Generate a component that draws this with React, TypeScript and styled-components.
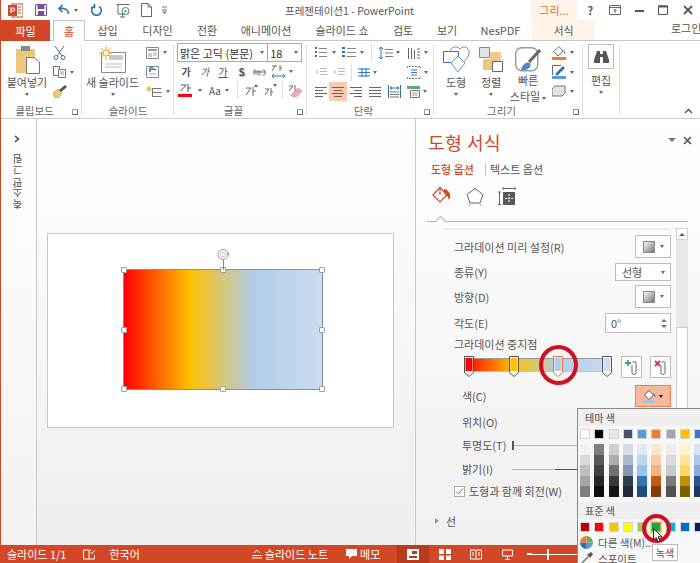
import React from 'react';
import styled, { createGlobalStyle } from 'styled-components';

const GlobalStyle = createGlobalStyle`
  html, body { margin: 0; padding: 0; background: #fff; }
  body { font-family: "Noto Sans CJK KR", "Liberation Sans", sans-serif; font-size: 11px; color: #444; }
  * { box-sizing: border-box; }
`;

const RED = '#D24726';

const Root = styled.div`
  position: relative; width: 700px; height: 563px; overflow: hidden;
  display: flex; flex-direction: column; background: #fff; border-left: 1px solid ${RED};
`;
const TitleBar = styled.div`display: flex; height: 20px; align-items: center; flex: none;`;
const Quick = styled.div`display: flex; width: 531px; height: 20px; align-items: center;`;
const QuickSlot = styled.div<{ $w: number }>`width: ${p => p.$w}px; display: flex; justify-content: center; align-items: center; gap: 4px; height: 20px; flex: none;`;
const AppTitle = styled.div`margin-left: 113px; font-size: 10.5px; color: #555; white-space: nowrap;`;
const ContextTitle = styled.div`
  width: 46px; height: 20px; background: #fdf3e9; color: #d9722c; font-size: 11px;
  display: flex; align-items: center; justify-content: center; flex: none;
`;
const WinControls = styled.div`display: flex; margin-left: 1px; align-items: center;`;
const WinBtn = styled.div`width: 24.4px; height: 20px; display: flex; align-items: center; justify-content: center; font-weight: 700; font-size: 11px; color: #555;`;

const TabBar = styled.div`display: flex; height: 21px; flex: none; border-bottom: 1px solid #c6c6c6; align-items: stretch;`;
const FileTab = styled.div`width: 49px; background: ${RED}; color: #fff; display: flex; align-items: center; justify-content: center; font-size: 11px; margin-bottom: -1px; margin-right: 3px;`;
const Tab = styled.div<{ $w: number; $active?: boolean; $context?: boolean }>`
  width: ${p => p.$w}px; display: flex; align-items: center; justify-content: center; font-size: 11px; white-space: nowrap;
  color: ${p => (p.$active ? RED : '#555')};
  background: ${p => (p.$context ? '#fdf3e9' : '#fff')};
  ${p => p.$active && 'border: 1px solid #c6c6c6; border-bottom: 0; margin-bottom: -1px; height: 21px;'}
`;
const Login = styled.div`margin-left: auto; font-size: 11px; color: #555; align-self: center; white-space: nowrap; margin-bottom: 5px; width: 29px; overflow: hidden;`;

const Ribbon = styled.div`display: flex; height: 78px; flex: none; border-bottom: 1px solid #cfcfcf; position: relative;`;
const Group = styled.div<{ $w: number }>`
  width: ${p => p.$w}px; flex: none; position: relative; display: flex; flex-direction: column;
  margin-top: 2px; &::after { content: ''; position: absolute; right: 0; top: 2px; bottom: 3px; width: 1px; background: #dedede; }
`;
const GroupBody = styled.div`flex: 1; display: flex; min-height: 0;`;
const GroupLabel = styled.div<{ $launcher?: boolean }>`
  height: 14px; text-align: center; font-size: 10.5px; line-height: 14px; color: #666; padding-right: ${p => (p.$launcher ? 14 : 0)}px;
`;
const Launcher = styled.div`
  position: absolute; right: 4px; bottom: 3px; width: 6px; height: 6px; border: 1px solid #999; border-width: 1px 0 0 1px;
  &::after { content: ''; position: absolute; right: 0; bottom: 0; width: 4px; height: 4px; border-right: 1px solid #666; border-bottom: 1px solid #666; }
`;
const BigBtn = styled.div<{ $w: number }>`
  width: ${p => p.$w}px; flex: none; display: flex; flex-direction: column; align-items: center;
  font-size: 11px; color: #555; line-height: 13px; text-align: center; white-space: nowrap;
`;
const IconSlot = styled.div`height: 33px; display: flex; align-items: center; justify-content: center; flex: none;`;
const BigLabel = styled.div``;
const TwoLineLabel = styled.div`margin-top: -4px; line-height: 16px;`;
const Caret = styled.span<{ $dark?: boolean }>`
  display: inline-block; width: 0; height: 0; flex: none;
  border-left: 2.5px solid transparent; border-right: 2.5px solid transparent;
  border-top: 3px solid ${p => (p.$dark ? '#222' : '#666')};
`;
const InlineCaret = styled(Caret)`margin-left: 2px; vertical-align: middle;`;
const CaretLine = styled.div`height: 10px; display: flex; align-items: center; justify-content: center;`;
const SmallCol = styled.div<{ $w: number; $pl?: number }>`width: ${p => p.$w}px; flex: none; display: flex; flex-direction: column; padding-left: ${p => p.$pl ?? 0}px;`;
const SmallBtn = styled.div`height: 19.5px; display: flex; align-items: center; gap: 4px;`;
const FontCol = styled.div`display: flex; flex-direction: column; padding: 0 0 0 3px; width: 100%;`;
const ComboRow = styled.div`display: flex; height: 19px; border: 1px solid #ababab; width: 125px; background: #fff;`;
const Combo = styled.div<{ $w: number }>`
  width: ${p => p.$w}px; display: flex; align-items: center; justify-content: space-between; padding: 0 3px 0 2px; font-size: 11px; color: #333;
  white-space: nowrap; & + & { border-left: 1px solid #ababab; }
`;
const FontRow = styled.div`height: 19px; display: flex; align-items: center;`;
const FontCell = styled.div<{ $w: number; $bold?: boolean; $italic?: boolean; $under?: boolean; $shadow?: boolean }>`
  width: ${p => p.$w}px; flex: none; display: flex; align-items: center; justify-content: center; gap: 3px; font-size: 10px; color: #555; white-space: nowrap;
  font-weight: ${p => (p.$bold ? 700 : 400)}; font-style: ${p => (p.$italic ? 'italic' : 'normal')};
  text-decoration: ${p => (p.$under ? 'underline' : 'none')};
  text-shadow: ${p => (p.$shadow ? '1px 1px 1px #aaa' : 'none')};
`;
const VSep = styled.div`width: 1px; height: 17px; background: #dedede; flex: none;`;
const ParaGrid = styled.div`display: flex; flex-direction: column;`;
const ParaRow = styled.div`display: flex; height: 19.5px; align-items: center;`;
const ParaCell = styled.div<{ $w: number; $on?: boolean }>`
  width: ${p => p.$w}px; flex: none; height: 19px; display: flex; align-items: center; justify-content: center; gap: 3px;
  background: ${p => (p.$on ? '#fcc9ae' : 'transparent')};
`;
const BinoBox = styled.div`width: 26px; height: 25px; border: 1px solid #bcbcbc; display: flex; align-items: center; justify-content: center; margin: 1px 0 5px; flex: none;`;
const Collapse = styled.div`position: absolute; right: 7px; bottom: 4px; color: #555; display: flex;`;

const Main = styled.div`flex: 1; display: flex; min-height: 0;`;
const SidePane = styled.div`
  width: 36px; flex: none; border-right: 1px solid #c9c9c9; display: flex; flex-direction: column; align-items: center;
  padding-top: 16px; background: linear-gradient(#fff, #f2f2f2); padding-right: 3px;
`;
const SideText = styled.div`
  writing-mode: vertical-rl; transform: rotate(180deg); font-size: 10.5px; color: #555; margin-top: 11px; white-space: nowrap;
`;
const Canvas = styled.div`
  width: 379px; flex: none; padding: 114px 0 0 10px; background: linear-gradient(#fff, #eeeeee);
  border-right: 1px solid #c9c9c9;
`;
const Slide = styled.div`position: relative; width: 347px; height: 195px; background: #fff; border: 1px solid #c8c8c8;`;
const ShapeBox = styled.div`
  position: absolute; left: 75px; top: 35px; width: 200px; height: 121px; border: 1px solid #7e93a8;
  background: linear-gradient(90deg, #ff0000 0%, #ffc000 33%, #b0cde8 65%, #cadcf0 100%);
`;
const Handle = styled.span<{ $x: number; $y: number }>`
  position: absolute; left: ${p => p.$x}%; top: ${p => p.$y}%; width: 6px; height: 6px; margin: -3px 0 0 -3px; background: #fff; border: 1px solid #a0a0a0; border-radius: 1px;
`;
const RotateStem = styled.div`position: absolute; left: 50%; top: -10px; width: 1px; height: 10px; background: #8a8a8a;`;
const RotateHandle = styled.div`position: absolute; left: calc(50% - 6px); top: -22px; display: flex;`;

const Pane = styled.div`flex: 1; display: flex; flex-direction: column; min-width: 0; background: linear-gradient(#fff, #f0f0f0);`;
const PaneTitle = styled.div`
  height: 36px; display: flex; align-items: center; padding: 10px 8px 0 12px; color: ${RED}; font-size: 18px; letter-spacing: 0.6px;
`;
const PaneClose = styled.div`margin-left: auto; display: flex; align-items: center; gap: 7px; margin-bottom: 4px;`;
const PaneTabs = styled.div`height: 18px; margin-top: 5px; display: flex; align-items: center; padding-left: 15px; font-size: 11px;`;
const PaneTab = styled.div<{ $active?: boolean }>`color: ${p => (p.$active ? RED : '#555')}; font-weight: ${p => (p.$active ? 500 : 400)}; white-space: nowrap;`;
const PaneTabSep = styled.div`width: 1px; height: 13px; background: #c8c8c8; margin: 0 4px 0 11px;`;
const PaneIcons = styled.div`height: 30px; margin-top: 3px; display: flex; align-items: center; padding-left: 16px; gap: 14px;`;
const NotchLine = styled.div`
  position: relative; height: 1px; background: #b5b5b5; margin: 10px 12px 0 11px; flex: none;
  &::after { content: ''; position: absolute; left: 9px; top: -4px; width: 8px; height: 8px; background: #fbfbfb; border-left: 1px solid #b5b5b5; border-top: 1px solid #b5b5b5; transform: rotate(45deg) scale(.9); }
`;
const PaneBody = styled.div`flex: 1; display: flex; margin-top: 6px; min-height: 0;`;
const PaneScroll = styled.div`width: 255px; flex: none; border-top: 2px solid #ececec; background-clip: padding-box; position: relative;
  &::before { content: ''; position: absolute; left: 0; width: 29px; top: -2px; height: 2px; background: #f9f9f9; }
`;
const ScrollBar = styled.div`width: 12px; margin-left: 5px; background: #e9e9e9; display: flex; flex-direction: column; flex: none;`;
const ScrollUp = styled.div`height: 12px; background: #fff; border: 1px solid #cfcfcf; display: flex; align-items: center; justify-content: center;
  &::after { content: ''; border-left: 3px solid transparent; border-right: 3px solid transparent; border-bottom: 3px solid #666; }
`;
const ScrollThumb = styled.div`margin-top: 87px; flex: 1; background: #fff; border: 1px solid #cfcfcf;`;
const FormRow = styled.div<{ $h: number; $top: number; $indent?: boolean }>`
  height: ${p => p.$h}px; margin-top: ${p => p.$top}px; display: flex; align-items: center;
  padding-left: ${p => (p.$indent ? 46 : 38)}px; font-size: 11px; color: #555; white-space: nowrap;
`;
const Spacer = styled.div`flex: 1;`;
const IconCombo = styled.div`
  width: 36px; height: 100%; border: 1px solid #bdbdbd; background: #fff; display: flex; align-items: center; justify-content: center; gap: 5px;
`;
const GradIcon = styled.div`width: 12px; height: 12px; background: linear-gradient(135deg, #f8f8f8, #777); border: 1px solid #888;`;
const SelectBox = styled.div`
  width: 56px; height: 100%; border: 1px solid #bdbdbd; background: #fff; display: flex; align-items: center; justify-content: space-between; padding: 0 5px 0 6px;
`;
const SpinBox = styled.div`
  width: 66px; height: 100%; border: 1px solid #bdbdbd; background: #fff; display: flex; align-items: center; justify-content: space-between; padding: 0 3px 0 5px;
`;
const SpinArrows = styled.div`display: flex; flex-direction: column; gap: 3px;
  & > i { display: block; border-left: 3px solid transparent; border-right: 3px solid transparent; }
  & > i:first-child { border-bottom: 3px solid #777; }
  & > i:last-child { border-top: 3px solid #777; }
`;
const StopRow = styled.div`height: 22px; margin-top: 5px; display: flex; padding-left: 48px;`;
const StopBar = styled.div`
  position: relative; width: 147px; height: 14px; margin-top: 2px; flex: none;
  background: linear-gradient(90deg, #ff0000 0%, #ffc000 33%, #b0cde8 65%, #cadcf0 100%);
  box-shadow: inset 0 1px #9a9a9a, inset 0 -1px #c4c4c4;
`;
const Stop = styled.svg<{ $x: number }>`position: absolute; left: ${p => p.$x}px; top: -2px;`;
const StopBtn = styled.div<{ $ml: number }>`
  width: 21px; height: 22px; margin-left: ${p => p.$ml}px; border: 1px solid #bdbdbd; background: #fff; display: flex; align-items: center; justify-content: center; flex: none;
`;
const ColorBtn = styled.div`
  width: 36px; height: 100%; background: #f6b99c; border: 1px solid #ef7d4f; display: flex; align-items: center; justify-content: center; gap: 3px;
`;
const SliderTrack = styled.div<{ $w: number }>`
  position: absolute; left: 96px; width: ${p => p.$w}px; height: 1px; background: #bbb;
`;
const SliderMark = styled.div`position: absolute; left: 0; top: -4px; width: 2px; height: 9px; background: #555;`;
const SliderDark = styled.div`position: absolute; left: 43px; right: 0; top: 0; height: 1px; background: #555;`;
const SliderRow = styled(FormRow)`position: relative;`;
const Check = styled.div`width: 11px; height: 11px; border: 1px solid #aaa; background: #fff; margin-right: 4px; display: flex; align-items: center; justify-content: center;`;
const SectionArrow = styled.span`display: inline-block; margin-left: -19px; margin-right: 7px; border-left: 4px solid #999; border-top: 3.5px solid transparent; border-bottom: 3.5px solid transparent;`;

const StatusBar = styled.div`
  height: 18px; flex: none; background: ${RED}; color: #fff; display: flex; align-items: center; font-size: 11px; padding-left: 6px; white-space: nowrap;
`;
const StatusItem = styled.div<{ $left: number; $gap?: number }>`margin-left: ${p => p.$left}px; display: flex; align-items: center; gap: ${p => p.$gap ?? 3}px; flex: none;`;
const ViewBtn = styled.div<{ $w: number; $on?: boolean; $left?: number }>`
  width: ${p => p.$w}px; height: 18px; margin-left: ${p => p.$left ?? 0}px; background: ${p => (p.$on ? '#b83b1e' : 'transparent')}; display: flex; align-items: center; justify-content: center; flex: none;
`;
const ZoomLine = styled.div`position: relative; width: 50px; height: 1px; background: #fff; margin-left: 4px; flex: none;
  &::before { content: ''; position: absolute; left: 0; top: -1px; width: 5px; height: 2px; background: #fff; }
  &::after { content: ''; position: absolute; left: 20px; top: -5px; width: 2px; height: 11px; background: #fff; }
`;

const Popup = styled.div`
  position: absolute; left: 576px; top: 408px; width: 150px; bottom: 0; background: #f7f7f7; border: 1px solid #8a8a8a; border-right: 0; border-bottom: 0; display: flex; flex-direction: column;
`;
const PopHeader = styled.div`height: 17px; background: #efefef; font-size: 10px; font-weight: 500; color: #666; padding-left: 7px; display: flex; align-items: center; flex: none;`;
const SwatchRow = styled.div`display: flex; padding: 3px 0 0 2px; flex: none;`;
const Swatch = styled.div<{ $c: string; $hot?: boolean }>`
  width: 10px; height: 10px; margin-right: 4.3px; flex: none; background: ${p => p.$c}; border: 1px solid ${p => (p.$hot ? '#f9a83d' : '#d4d4d4')};
  ${p => p.$hot && 'outline: 1px solid #f9c66b;'}
`;
const ShadeRow = styled.div`display: flex; padding: 5px 0 0 2px; flex: none; height: 63px;`;
const ShadeCol = styled.div`width: 10px; height: 53px; margin-right: 4.3px; display: flex; flex-direction: column; flex: none;`;
const Shade = styled.div<{ $c: string }>`flex: 1; background: ${p => p.$c};`;
const PopItems = styled.div`padding-top: 2px; display: flex; flex-direction: column;`;
const PopItem = styled.div`height: 16px; display: flex; align-items: center; gap: 5px; padding-left: 2px; font-size: 10.5px; color: #555; white-space: nowrap; flex: none;`;

const RingMark = styled.div<{ $x: number; $y: number; $w: number; $h: number }>`
  position: absolute; left: ${p => p.$x}px; top: ${p => p.$y}px; width: ${p => p.$w}px; height: ${p => p.$h}px;
  border: 4px solid #d1101f; border-radius: 50%; pointer-events: none;
`;
const CursorMark = styled.svg`position: absolute; left: 652px; top: 528px;`;
const TipBox = styled.div`
  position: absolute; left: 651px; top: 544px; width: 26px; height: 17px; background: #fff; border: 1px solid #bdbdbd; font-size: 10px; color: #555;
  display: flex; align-items: center; justify-content: center; white-space: nowrap;
`;

type IconProps = { w?: number; h?: number; children: React.ReactNode };
const Ico = ({ w = 14, h = 14, children }: IconProps) => (
  <svg width={w} height={h} viewBox={`0 0 ${w} ${h}`} fill="none" style={{ flex: 'none', display: 'block' }}>{children}</svg>
);

const AlignIcon = ({ kind }: { kind: 'l' | 'c' | 'r' | 'j' }) => {
  const d = {
    l: 'M0 1.500H12M0 4.500H8M0 7.500H12M0 10.500H8',
    c: 'M0 1.500H12M2 4.500H10M0 7.500H12M2 10.500H10',
    r: 'M0 1.500H12M4 4.500H12M0 7.500H12M4 10.500H12',
    j: 'M0 1.500H12M0 4.500H12M0 7.500H12M0 10.500H12',
  }[kind];
  return <Ico w={12} h={12}><path d={d} stroke="#666" /></Ico>;
};

const THEME = ['#FFFFFF', '#000000', '#E7E6E6', '#44546A', '#5B9BD5', '#ED7D31', '#A5A5A5', '#FFC000', '#4472C4'];
const SHADES = [
  ['#F2F2F2', '#D9D9D9', '#BFBFBF', '#A6A6A6', '#7F7F7F'],
  ['#7F7F7F', '#595959', '#404040', '#262626', '#0D0D0D'],
  ['#D0CECE', '#AFABAB', '#757070', '#3A3838', '#171616'],
  ['#D6DCE4', '#ADB9CA', '#8496B0', '#333F4F', '#222B35'],
  ['#DEEAF6', '#BDD7EE', '#9CC3E5', '#2E75B5', '#1F4E79'],
  ['#FBE5D5', '#F7CBAC', '#F4B183', '#C55A11', '#833C0B'],
  ['#EDEDED', '#DBDBDB', '#C9C9C9', '#7B7B7B', '#525252'],
  ['#FFF2CC', '#FEE599', '#FFD965', '#BF9000', '#7F6000'],
  ['#D9E2F3', '#B4C6E7', '#8EAADB', '#2F5496', '#1F3864'],
];
const STANDARD = ['#C00000', '#FF0000', '#FFC000', '#FFFF00', '#92D050', '#00B050', '#00B0F0', '#0070C0', '#002060'];
const HANDLES: [number, number][] = [[0, 0], [50, 0], [100, 0], [0, 50], [100, 50], [0, 100], [50, 100], [100, 100]];

const StopMark = ({ x, fill, hot }: { x: number; fill: string; hot?: boolean }) => (
  <Stop $x={x} width="10" height="22" viewBox="0 0 10 22">
    <path d="M.5.500H9.500V16.500L5 20.500.5 16.500Z" fill="#fff" stroke={hot ? '#e8743b' : '#555'} />
    <rect x="1.500" y="2" width="7" height="13" fill={fill} />
  </Stop>
);

const TitleIcons = () => (
  <Quick>
    <QuickSlot $w={29}>
      <Ico w={15} h={15}>
        <rect x="4" y="1" width="11" height="13" fill="#fff" stroke="#d24726" />
        <path d="M10 4h3M10 7h3M10 10h3" stroke="#d24726" />
        <rect x="0" y="2" width="9" height="11" fill="#d24726" />
        <path d="M3 10V5h2a1.400 1.400 0 0 1 0 3H3" stroke="#fff" strokeWidth="1.200" />
      </Ico>
    </QuickSlot>
    <QuickSlot $w={22}>
      <Ico w={12} h={12}>
        <path d="M.5.500H11.500V11.500H.5Z" stroke="#7b4b9e" fill="#fff" />
        <rect x="2.500" y="1" width="7" height="4" fill="#7b4b9e" />
        <rect x="3" y="7" width="6" height="4" fill="#7b4b9e" />
      </Ico>
    </QuickSlot>
    <QuickSlot $w={31}>
      <Ico w={13} h={12}>
        <path d="M11.500 10C11.500 5.500 8 4 3 4.500M5.500 1 2 4.500 5.500 8" stroke="#2f75b5" strokeWidth="1.600" />
      </Ico>
      <Caret />
    </QuickSlot>
    <QuickSlot $w={28}>
      <Ico w={12} h={12}>
        <path d="M3 2.400a4.800 4.800 0 1 0 5 0M3.500 0v3.500H0" stroke="#2f75b5" strokeWidth="1.600" />
      </Ico>
    </QuickSlot>
    <QuickSlot $w={24}>
      <Ico w={15} h={15}>
        <path d="M.5 1.500H13.500M2 2V11H9M4 14H9M6.500 11V14" stroke="#666" />
        <circle cx="9.500" cy="8" r="3.500" stroke="#3f8f5a" />
        <path d="M8.500 6.500 11 8 8.500 9.500Z" fill="#3f8f5a" />
      </Ico>
    </QuickSlot>
    <QuickSlot $w={23}>
      <Ico w={11} h={14}>
        <path d="M.5.500H7L10.500 4V13.500H.5ZM7 .500V4H10.500" stroke="#666" fill="#fff" />
      </Ico>
    </QuickSlot>
    <QuickSlot $w={14}>
      <Ico w={6} h={8}>
        <path d="M0 1H5M0 4H5" stroke="#777" /><path d="M0 5.500H5L2.500 8Z" fill="#777" />
      </Ico>
    </QuickSlot>
    <AppTitle>프레젠테이션1 - PowerPoint</AppTitle>
  </Quick>
);

const App: React.FC = () => (
  <>
    <GlobalStyle />
    <Root>
      <TitleBar>
        <TitleIcons />
        <ContextTitle>그리...</ContextTitle>
        <WinControls>
          <WinBtn>?</WinBtn>
          <WinBtn>
            <Ico w={12} h={10}><path d="M.5.500H11.500V9.500H.5ZM.5 2.500H11.500M6 4V8M4.500 6 6 4.500 7.500 6" stroke="#666" /></Ico>
          </WinBtn>
          <WinBtn><Ico w={9} h={9}><path d="M0 5H9" stroke="#555" strokeWidth="2" /></Ico></WinBtn>
          <WinBtn><Ico w={10} h={10}><path d="M.5 1H9.500V9.500H.5Z" stroke="#555" /><path d="M0 1.500H10" stroke="#555" strokeWidth="2" /></Ico></WinBtn>
          <WinBtn><Ico w={10} h={10}><path d="M1 1 9 9M9 1 1 9" stroke="#555" strokeWidth="1.800" /></Ico></WinBtn>
        </WinControls>
      </TitleBar>

      <TabBar>
        <FileTab>파일</FileTab>
        <Tab $w={32} $active>홈</Tab>
        <Tab $w={45}>삽입</Tab>
        <Tab $w={55}>디자인</Tab>
        <Tab $w={44}>전환</Tab>
        <Tab $w={74}>애니메이션</Tab>
        <Tab $w={78}>슬라이드 쇼</Tab>
        <Tab $w={44}>검토</Tab>
        <Tab $w={44}>보기</Tab>
        <Tab $w={63}>NesPDF</Tab>
        <Tab $w={63} $context>서식</Tab>
        <Login>로그인</Login>
      </TabBar>

      <Ribbon>
        <Group $w={81}>
          <GroupBody>
            <BigBtn $w={52}>
              <IconSlot>
                <Ico w={26} h={29}>
                  <rect x="2" y="4" width="19" height="24" fill="#eec77e" />
                  <rect x="7" y="1" width="9" height="5" fill="#8a8a8a" />
                  <path d="M12.500 12.500H20L25.500 17V28.500H12.500Z" fill="#fff" stroke="#777" />
                </Ico>
              </IconSlot>
              <BigLabel>붙여넣기</BigLabel>
              <CaretLine><Caret /></CaretLine>
            </BigBtn>
            <SmallCol $w={28}>
              <SmallBtn>
                <Ico w={13} h={14}>
                  <path d="M2 0 9 10M11 0 4 10" stroke="#666" />
                  <circle cx="3" cy="11.500" r="2" stroke="#2f75b5" /><circle cx="10" cy="11.500" r="2" stroke="#2f75b5" />
                </Ico>
              </SmallBtn>
              <SmallBtn>
                <Ico w={13} h={12}>
                  <path d="M.5.500H6.500V9.500H.5Z" fill="#fff" stroke="#2f75b5" />
                  <path d="M5.500 3.500H12.500V11.500H5.500Z" fill="#fff" stroke="#777" />
                  <path d="M7 6H11M7 8H11" stroke="#999" />
                </Ico>
                <Caret />
              </SmallBtn>
              <SmallBtn>
                <Ico w={14} h={13}>
                  <path d="M0 8 5 4 9 8 5 13H2Z" fill="#eec77e" stroke="#b98a35" strokeWidth=".6" />
                  <path d="M6 5 12 0 14 2 8 7Z" fill="#555" />
                </Ico>
              </SmallBtn>
            </SmallCol>
          </GroupBody>
          <GroupLabel $launcher>클립보드</GroupLabel>
          <Launcher />
        </Group>

        <Group $w={92}>
          <GroupBody>
            <BigBtn $w={61}>
              <IconSlot>
                <Ico w={27} h={28}>
                  <path d="M2.500 6.500H26.500V26.500H2.500Z" fill="#fff" stroke="#888" />
                  <rect x="10" y="9" width="14" height="5" fill="#c9c9c9" />
                  <path d="M6 18H23M6 21H23" stroke="#bbb" />
                  <path d="M7 0V14M0 7H14M2 2 12 12M12 2 2 12" stroke="#f0b12f" />
                  <circle cx="7" cy="7" r="3" fill="#fff" stroke="#f0b12f" />
                </Ico>
              </IconSlot>
              <BigLabel>새 슬라이드</BigLabel>
              <CaretLine><Caret /></CaretLine>
            </BigBtn>
            <SmallCol $w={30} $pl={3}>
              <SmallBtn>
                <Ico w={13} h={12}><path d="M.5.500H12.500V11.500H.5Z" fill="#fff" stroke="#888" /><path d="M2 3H11" stroke="#999" strokeWidth="2" /><path d="M2 6H6V10H2Z" fill="#ccc" /><path d="M7 6H11M7 8H11" stroke="#aaa" /></Ico>
                <Caret />
              </SmallBtn>
              <SmallBtn>
                <Ico w={13} h={12}><path d="M.5.500H12.500V11.500H.5Z" fill="#fff" stroke="#888" /><path d="M3 5.500C4 2.500 8 2.500 10 4M7 1 4 2V6" stroke="#2f75b5" strokeWidth="1.300" /><path d="M3 8H10" stroke="#aaa" /></Ico>
              </SmallBtn>
              <SmallBtn>
                <Ico w={16} h={12}><path d="M0 3H6M3 0V6M1 1 5 5M5 1 1 5" stroke="#f0b12f" /><path d="M6.500 2.500H15.500M6.500 6.500H15.500M6.500 10.500H15.500M6.500 2V11" stroke="#777" /></Ico>
                <Caret />
              </SmallBtn>
            </SmallCol>
          </GroupBody>
          <GroupLabel>슬라이드</GroupLabel>
        </Group>

        <Group $w={133}>
          <GroupBody>
            <FontCol>
              <ComboRow>
                <Combo $w={90}>맑은 고딕 (본문)<Caret /></Combo>
                <Combo $w={34}>18<Caret /></Combo>
              </ComboRow>
              <FontRow>
                <FontCell $w={18} $bold>가</FontCell>
                <FontCell $w={19} $italic>가</FontCell>
                <FontCell $w={18} $under>가</FontCell>
                <FontCell $w={19} $bold $shadow>S</FontCell>
                <FontCell $w={17}><Ico w={13} h={8}><path d="M0 4H13" stroke="#666" /><path d="M1 7V2H3V7M5 2V7H7V2M9 2H12V7H9" stroke="#666" strokeWidth=".7" /></Ico></FontCell>
                <FontCell $w={28}>
                  <Ico w={15} h={14}><path d="M1 1H6M4 1 1 6M9 0V6M9 3H11" stroke="#666" /><path d="M1 11H14M1 11 3 9M1 11 3 13M14 11 12 9M14 11 12 13" stroke="#2f75b5" /></Ico>
                  <Caret />
                </FontCell>
              </FontRow>
              <FontRow>
                <FontCell $w={15}>
                  <Ico w={14} h={15}><path d="M3 2H8L3 8M10 1V9M10 5H13" stroke="#555" /><rect x="0" y="11" width="14" height="3" fill="#ff0000" /></Ico>
                </FontCell>
                <FontCell $w={16}><Caret /></FontCell>
                <FontCell $w={14}>Aa</FontCell>
                <FontCell $w={10}><Caret /></FontCell>
                <FontCell $w={5} />
                <VSep />
                <FontCell $w={26}>
                  <Ico w={13} h={13}><path d="M1 4H6L1 11M8 3V12M8 7H11" stroke="#666" /><path d="M11 0 13 3H9Z" fill="#2f75b5" /></Ico>
                </FontCell>
                <FontCell $w={12}>
                  <Ico w={13} h={13}><path d="M1 5H5L1 11M7 4V12M7 8H9" stroke="#666" /><path d="M11 3 13 0H9Z" fill="#2f75b5" /></Ico>
                </FontCell>
                <FontCell $w={6} />
                <VSep />
                <FontCell $w={24}>
                  <Ico w={15} h={14}><path d="M1 2H5L1 7M7 1V8" stroke="#666" /><path d="M3 11 10 4 14 7 8 13H5Z" fill="#f3a7b4" stroke="#d77" strokeWidth=".5" /></Ico>
                </FontCell>
              </FontRow>
            </FontCol>
          </GroupBody>
          <GroupLabel $launcher>글꼴</GroupLabel>
          <Launcher />
        </Group>

        <Group $w={127}>
          <GroupBody>
            <ParaGrid>
              <ParaRow>
                <ParaCell $w={7} />
                <ParaCell $w={13}><Ico w={12} h={11}><path d="M4 1.500H12M4 5.500H12M4 9.500H12" stroke="#888" /><path d="M0 1H2M0 5H2M0 9H2" stroke="#2f75b5" strokeWidth="2" /></Ico></ParaCell>
                <ParaCell $w={14}><Caret /></ParaCell>
                <ParaCell $w={15}><Ico w={14} h={11}><path d="M5 1.500H14M5 5.500H14M5 9.500H14" stroke="#888" /><path d="M0 1H3M0 5H3M0 9H3" stroke="#2f75b5" strokeWidth="2" /></Ico></ParaCell>
                <ParaCell $w={12}><Caret /></ParaCell>
                <ParaCell $w={3} />
                <VSep />
                <ParaCell $w={34}><Ico w={14} h={14}><path d="M2 1V13M0 3 2 1 4 3M0 11 2 13 4 11" stroke="#2f75b5" /><path d="M6 3.500H14M6 7H14M6 10.500H14" stroke="#777" /></Ico><Caret /></ParaCell>
                <ParaCell $w={23}><Ico w={13} h={12}><path d="M.5 1V12M3.500 1V12M6.500 3V12" stroke="#666" /><path d="M9 2H12M9 5H12M9 8H12M9 11H12" stroke="#2f75b5" /></Ico><Caret /></ParaCell>
              </ParaRow>
              <ParaRow>
                <ParaCell $w={7} />
                <ParaCell $w={13}><Ico w={12} h={10}><path d="M5 1.500H12M5 4.500H12M5 7.500H12" stroke="#bbb" /><path d="M3 3 1 5 3 7" stroke="#bbb" /></Ico></ParaCell>
                <ParaCell $w={24}><Ico w={12} h={10}><path d="M5 1.500H12M5 4.500H12M5 7.500H12" stroke="#bbb" /><path d="M1 3 3 5 1 7" stroke="#bbb" /></Ico></ParaCell>
                <VSep />
                <ParaCell $w={30}><Ico w={12} h={9}><path d="M0 1H12M0 4.500H12M0 8H12M4 0V9M8 0V9" stroke="#2f75b5" /></Ico><Caret /></ParaCell>
                <ParaCell $w={24} />
                <ParaCell $w={22}><Ico w={14} h={13}><path d="M.5 2V.5H13.500V2M.5 11V12.500H13.500V11" stroke="#777" strokeDasharray="2 1" /><path d="M4 4H10M4 6.500H10M4 9H10" stroke="#2f75b5" /></Ico><Caret /></ParaCell>
              </ParaRow>
              <ParaRow>
                <ParaCell $w={7} />
                <ParaCell $w={13}><AlignIcon kind="l" /></ParaCell>
                <ParaCell $w={2} />
                <ParaCell $w={18} $on><AlignIcon kind="c" /></ParaCell>
                <ParaCell $w={17}><AlignIcon kind="r" /></ParaCell>
                <ParaCell $w={22}><AlignIcon kind="j" /></ParaCell>
                <ParaCell $w={16}><Ico w={13} h={13}><path d="M.5 0V13M12.500 0V13" stroke="#2f75b5" /><path d="M2 3H11M2 3 4 1.500M2 3 4 4.500M11 3 9 1.500M11 3 9 4.500" stroke="#2f75b5" /><path d="M2 7H11M2 9.500H11M2 12H11" stroke="#777" /></Ico></ParaCell>
                <ParaCell $w={4} />
                <ParaCell $w={22}><Ico w={13} h={13}><path d="M0 1H13V4H0Z" fill="#5ea77a" /><path d="M3.500 5.500H12.500V12.500H3.500Z" fill="#fff" stroke="#777" /><path d="M5 8H11M5 10H11" stroke="#999" /></Ico><Caret /></ParaCell>
              </ParaRow>
            </ParaGrid>
          </GroupBody>
          <GroupLabel $launcher>단락</GroupLabel>
          <Launcher />
        </Group>

        <Group $w={149}>
          <GroupBody>
            <BigBtn $w={44}>
              <IconSlot>
                <Ico w={27} h={27}>
                  <path d="M.5 5.500H15.500V16.500H.5Z" stroke="#2f75b5" fill="#fff" />
                  <path d="M7 6C7 1 14 -1 17 3 C20 -1 27 1 26 8 C25.500 12 21 15 20 17" stroke="#888" />
                  <path d="M15 10 22 17 15 26 8 17Z" fill="#fff" stroke="#5b9bd5" />
                </Ico>
              </IconSlot>
              <BigLabel>도형</BigLabel>
              <CaretLine><Caret /></CaretLine>
            </BigBtn>
            <BigBtn $w={26}>
              <IconSlot>
                <Ico w={24} h={25}>
                  <path d="M.5.500H10.500V10.500H.5Z" fill="#e5e5e5" stroke="#888" />
                  <rect x="11" y="5" width="11" height="9" fill="#f2c88a" />
                  <rect x="4" y="12" width="10" height="11" fill="#eec77e" />
                  <path d="M13.500 14.500H23.500V24.500H13.500Z" fill="#fff" stroke="#666" />
                </Ico>
              </IconSlot>
              <BigLabel>정렬</BigLabel>
              <CaretLine><Caret /></CaretLine>
            </BigBtn>
            <BigBtn $w={48}>
              <IconSlot>
                <Ico w={26} h={25}>
                  <rect x=".7" y=".7" width="22" height="23" rx="6" fill="#fff" stroke="#999" strokeWidth="1.400" />
                  <path d="M25 3 14 15" stroke="#666" strokeWidth="3" />
                  <path d="M6 23C7 18 11 14 15 16 17 19 14 24 6 23Z" fill="#4d8ac9" />
                </Ico>
              </IconSlot>
              <TwoLineLabel>
                <div>빠른</div>
                <div>스타일<InlineCaret /></div>
              </TwoLineLabel>
            </BigBtn>
            <SmallCol $w={30}>
              <SmallBtn>
                <Ico w={14} h={14}><path d="M7 .500 11 5 6 10 1.500 5.500Z" fill="#fff" stroke="#777" /><path d="M11 4C13 5 14 7 12.500 8Z" fill="#3f74b5" /><rect y="11" width="14" height="3" fill="#ed7d31" /></Ico>
                <Caret />
              </SmallBtn>
              <SmallBtn>
                <Ico w={14} h={14}><path d="M.5 10V.5H9" stroke="#666" /><path d="M4 8 11 1 13 3 6 10 3.500 10.500Z" fill="#2f75b5" /><rect y="11" width="14" height="3" fill="#5b9bd5" /></Ico>
                <Caret />
              </SmallBtn>
              <SmallBtn>
                <Ico w={14} h={13}><path d="M3 1H13V8L10 11H0V4Z" fill="#e3e3e3" stroke="#777" /></Ico>
                <Caret />
              </SmallBtn>
            </SmallCol>
          </GroupBody>
          <GroupLabel $launcher>그리기</GroupLabel>
          <Launcher />
        </Group>

        <Group $w={37}>
          <GroupBody>
            <BigBtn $w={36}>
              <BinoBox>
                <Ico w={15} h={12}>
                  <path d="M3 0H6V3H9V0H12L15 9V12H9V6H6V12H0V9Z" fill="#555" />
                </Ico>
              </BinoBox>
              <BigLabel>편집</BigLabel>
              <CaretLine><Caret /></CaretLine>
            </BigBtn>
          </GroupBody>
        </Group>
        <Collapse><Ico w={9} h={6}><path d="M1 5 4.500 1.500 8 5" stroke="#555" strokeWidth="1.500" /></Ico></Collapse>
      </Ribbon>

      <Main>
        <SidePane>
          <Ico w={6} h={8}><path d="M1 1 4.500 4 1 7" stroke="#444" strokeWidth="1.500" /></Ico>
          <SideText>축소판 그림</SideText>
        </SidePane>
        <Canvas>
          <Slide>
            <ShapeBox>
              {HANDLES.map(([x, y]) => <Handle key={`${x}-${y}`} $x={x} $y={y} />)}
              <RotateStem />
              <RotateHandle>
                <Ico w={13} h={13}>
                  <circle cx="6" cy="6.500" r="5" stroke="#999" /><circle cx="6" cy="6.500" r="2.500" stroke="#bbb" />
                  <path d="M10 4 13 6.500 10 7Z" fill="#999" />
                </Ico>
              </RotateHandle>
            </ShapeBox>
          </Slide>
        </Canvas>

        <Pane>
          <PaneTitle>
            도형 서식
            <PaneClose>
              <Ico w={8} h={4}><path d="M0 0H8L4 4Z" fill="#777" /></Ico>
              <Ico w={9} h={9}><path d="M1 1 8 8M8 1 1 8" stroke="#555" strokeWidth="1.600" /></Ico>
            </PaneClose>
          </PaneTitle>
          <PaneTabs>
            <PaneTab $active>도형 옵션</PaneTab>
            <PaneTabSep />
            <PaneTab>텍스트 옵션</PaneTab>
          </PaneTabs>
          <PaneIcons>
            <Ico w={20} h={20}>
              <path d="M8 1.500 15 9 8 16 1 9Z" stroke={RED} strokeWidth="1.200" fill="#fff" />
              <path d="M8 1V7" stroke={RED} /><circle cx="8" cy="7.500" r="1" fill={RED} />
              <path d="M12 3C17 4 20 9 17 14 16 10 14 8 12 7Z" fill={RED} />
            </Ico>
            <Ico w={18} h={19}>
              <path d="M9 1.500 17 7.500 14 16H4L1 7.500Z" stroke="#666" fill="#fff" />
              <path d="M3 19 4.500 16M15 19 13.500 16" stroke="#aaa" />
            </Ico>
            <Ico w={18} h={18}>
              <path d="M5 1.500H17M5 0V3M17 0V3M1.500 5V17M0 5H3M0 17.500H3" stroke="#666" />
              <rect x="5" y="5" width="12" height="13" fill="#595959" />
              <path d="M11 7V16M7 11.500H15" stroke="#fff" strokeDasharray="2 1" />
            </Ico>
          </PaneIcons>
          <NotchLine />
          <PaneBody>
            <PaneScroll>
              <FormRow $h={23} $top={5}>
                그라데이션 미리 설정(R)<Spacer />
                <IconCombo><GradIcon /><Caret /></IconCombo>
              </FormRow>
              <FormRow $h={18} $top={5}>
                종류(Y)<Spacer />
                <SelectBox>선형<Caret /></SelectBox>
              </FormRow>
              <FormRow $h={23} $top={4}>
                방향(D)<Spacer />
                <IconCombo><GradIcon /><Caret /></IconCombo>
              </FormRow>
              <FormRow $h={20} $top={5}>
                각도(E)<Spacer />
                <SpinBox>0°<SpinArrows><i /><i /></SpinArrows></SpinBox>
              </FormRow>
              <FormRow $h={14} $top={4}>그라데이션 중지점</FormRow>
              <StopRow>
                <StopBar>
                  <StopMark x={0} fill="#ff0000" />
                  <StopMark x={45} fill="#ffc000" />
                  <StopMark x={89} fill="#b0cde8" hot />
                  <StopMark x={138} fill="#cadcf0" />
                </StopBar>
                <StopBtn $ml={10}>
                  <Ico w={13} h={15}><path d="M0 3H6M3 0V6" stroke="#3fa08a" strokeWidth="1.800" /><path d="M7 5V12.500A2 2 0 0 0 11 12.500V3A1.500 1.500 0 0 0 8 3" stroke="#666" /></Ico>
                </StopBtn>
                <StopBtn $ml={8}>
                  <Ico w={13} h={15}><path d="M1 1 6 6M6 1 1 6" stroke="#d1393a" strokeWidth="1.800" /><path d="M7 5V12.500A2 2 0 0 0 11 12.500V3A1.500 1.500 0 0 0 8 3" stroke="#666" /></Ico>
                </StopBtn>
              </StopRow>
              <FormRow $h={22} $top={7} $indent>
                색(C)<Spacer />
                <ColorBtn>
                  <Ico w={13} h={13}><path d="M6 .500 10.500 5 6 9.500 1.500 5Z" fill="#fff" stroke="#555" /><path d="M10 3C12 4 13 6 12 7.500Z" fill="#3f74b5" /><rect y="10.500" width="12" height="2.500" fill="#9dc3e6" /></Ico>
                  <Caret $dark />
                </ColorBtn>
              </FormRow>
              <FormRow $h={20} $top={5} $indent>위치(O)</FormRow>
              <SliderRow $h={20} $top={3} $indent>
                투명도(T)
                <SliderTrack $w={70}><SliderMark /></SliderTrack>
              </SliderRow>
              <SliderRow $h={20} $top={4} $indent>
                밝기(I)
                <SliderTrack $w={70}><SliderDark /></SliderTrack>
              </SliderRow>
              <FormRow $h={20} $top={2}>
                <Check><Ico w={9} h={9}><path d="M1 4.500 3.500 7 8 1.500" stroke="#777" /></Ico></Check>
                도형과 함께 회전(W)
              </FormRow>
              <FormRow $h={20} $top={10}>
                <SectionArrow />선
              </FormRow>
            </PaneScroll>
            <ScrollBar>
              <ScrollUp />
              <ScrollThumb />
            </ScrollBar>
          </PaneBody>
        </Pane>
      </Main>

      <StatusBar>
        <div>슬라이드 1/1</div>
        <StatusItem $left={17}>
          <Ico w={12} h={11}><path d="M.5 1H5.500L6 2 6.500 1H8M.5 1V10H6V2M6 10H11.500V6" stroke="#fff" /><path d="M7.500 3.500 9 5 11.500 1.500" stroke="#fff" /></Ico>
        </StatusItem>
        <StatusItem $left={14}>한국어</StatusItem>
        <StatusItem $left={112}>
          <Ico w={10} h={10}><path d="M2 4 5 1 8 4M0 6.500H10M0 9H10" stroke="#fff" /></Ico>
          슬라이드 노트
        </StatusItem>
        <StatusItem $left={18}>
          <Ico w={11} h={10}><path d="M0 0H11V7H6L3 10V7H0Z" fill="#fff" /></Ico>
          메모
        </StatusItem>
        <ViewBtn $w={32} $on $left={17}>
          <Ico w={12} h={11}><path d="M0 0H12V11H0Z" fill="#fff" /><rect x="5" y="2" width="5" height="3" fill="#b83b1e" /><rect x="2" y="7" width="8" height="2" fill="#b83b1e" /></Ico>
        </ViewBtn>
        <ViewBtn $w={31}><Ico w={12} h={11}><path d="M0 0H5V5H0ZM7 0H12V5H7ZM0 6.500H5V11H0ZM7 6.500H12V11H7Z" fill="#fff" /></Ico></ViewBtn>
        <ViewBtn $w={31}><Ico w={12} h={11}><path d="M.5 1H5.500L6 2 6.500 1H11.500V10H.5ZM6 2V10M2 4H4M2 6H4M8 4H10M8 6H10" stroke="#fff" /></Ico></ViewBtn>
        <ViewBtn $w={32}><Ico w={11} h={11}><path d="M.5 1H10.500V7H.5ZM5.500 7V10M3 10.500H8" stroke="#fff" /></Ico></ViewBtn>
        <ZoomLine />
      </StatusBar>

      <Popup>
        <PopHeader>테마 색</PopHeader>
        <SwatchRow>{THEME.map(c => <Swatch key={c} $c={c} />)}</SwatchRow>
        <ShadeRow>
          {SHADES.map(col => (
            <ShadeCol key={col[0]}>{col.map(c => <Shade key={c} $c={c} />)}</ShadeCol>
          ))}
        </ShadeRow>
        <PopHeader>표준 색</PopHeader>
        <SwatchRow>
          {STANDARD.map(c => <Swatch key={c} $c={c} $hot={c === '#00B050'} />)}
        </SwatchRow>
        <PopItems>
          <PopItem>
            <Ico w={13} h={13}>
              <path d="M6.500 6.500V0A6.500 6.500 0 0 1 13 6.500Z" fill="#70ad47" />
              <path d="M6.500 6.500H13A6.500 6.500 0 0 1 6.500 13Z" fill="#5b9bd5" />
              <path d="M6.500 6.500V13A6.500 6.500 0 0 1 0 6.500Z" fill="#2f6eb5" />
              <path d="M6.500 6.500H0A6.500 6.500 0 0 1 6.500 0Z" fill="#ed7d31" />
            </Ico>
            다른 색(M)...
          </PopItem>
          <PopItem>
            <Ico w={13} h={13}><path d="M1 12 8 5" stroke="#777" strokeWidth="1.500" /><path d="M7 3 10 6 13 2 11 0Z" fill="#555" /></Ico>
            스포이트
          </PopItem>
        </PopItems>
      </Popup>

      <RingMark $x={538} $y={345} $w={39} $h={40} />
      <RingMark $x={641} $y={514} $w={29} $h={29} />
      <TipBox>녹색</TipBox>
      <CursorMark width="10" height="15" viewBox="0 0 10 15">
        <path d="M.5.500V12L3.200 9.500 5 14 7 13 5.200 8.800H9Z" fill="#fff" stroke="#222" />
      </CursorMark>
    </Root>
  </>
);

export default App;
